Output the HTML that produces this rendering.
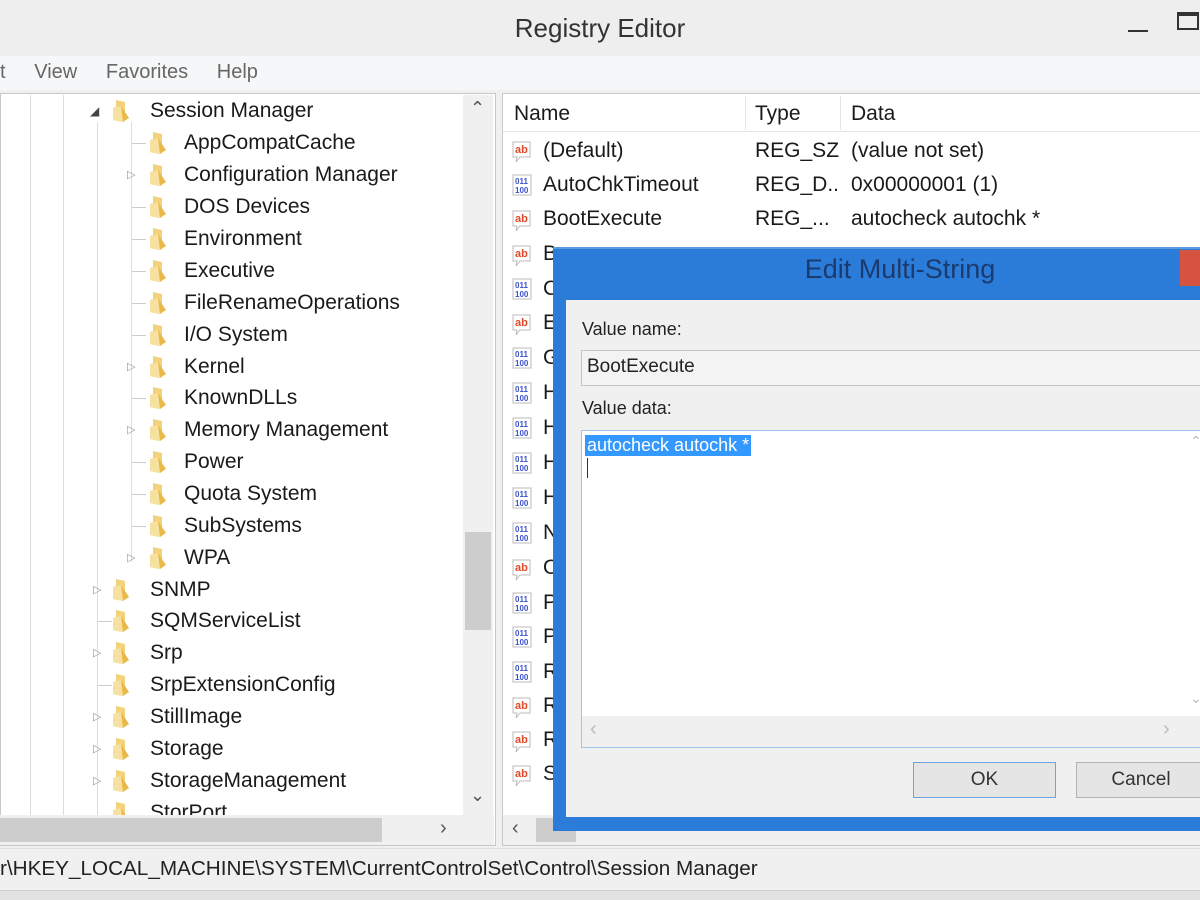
<!DOCTYPE html>
<html><head><meta charset="utf-8"><style>
*{margin:0;padding:0;box-sizing:border-box}
body{width:1200px;height:900px;overflow:hidden;background:#f0f0f0;font-family:"Liberation Sans",sans-serif;position:relative;color:#222}
.a{position:absolute;white-space:nowrap}
.t{font-size:21px;color:#1a1a1a;line-height:24px}
.f{position:absolute;width:20px;height:24px}
.ex{position:absolute;font-size:11px;color:#999}
.ic{position:absolute;width:24px;height:26px}
.h{position:absolute;height:1px;width:14px;background:#ccc}
</style></head><body>
<!-- title bar -->
<div class="a" style="left:0;top:0;width:1200px;height:56px;background:#eeeeee"></div>
<div class="a" style="left:0;top:13px;width:1200px;text-align:center;font-size:26px;color:#333">Registry Editor</div>
<div class="a" style="left:1128px;top:30px;width:20px;height:2px;background:#333"></div>
<div class="a" style="left:1177px;top:12px;width:22px;height:18px;border:2px solid #333;border-top-width:4px"></div>
<!-- menu -->
<div class="a" style="left:0;top:56px;width:1200px;height:34px;background:#f6f7f8"></div>
<div class="a" style="left:0;top:61px;font-size:20px;color:#666;word-spacing:4px">t&nbsp;&nbsp; View&nbsp;&nbsp; Favorites&nbsp;&nbsp; Help</div>
<!-- left pane -->
<div class="a" style="left:0;top:93px;width:496px;height:753px;background:#fff;border:1px solid #c8c8c8"></div>
<div class="a" style="left:30px;top:95px;width:1px;height:720px;background:#ddd"></div>
<div class="a" style="left:63px;top:95px;width:1px;height:720px;background:#ddd"></div>
<div class="a" style="left:97px;top:122px;width:1px;height:693px;background:#ddd"></div>
<div class="a" style="left:131px;top:122px;width:1px;height:440px;background:#ddd"></div>
<!-- vertical scrollbar -->
<div class="a" style="left:463px;top:95px;width:30px;height:720px;background:#f0f0f0"></div>
<div class="a" style="left:465px;top:532px;width:26px;height:98px;background:#cdcdcd"></div>
<div class="a" style="left:470px;top:98px;font-size:18px;color:#555">&#8963;</div>
<div class="a" style="left:470px;top:785px;font-size:18px;color:#555">&#8964;</div>
<!-- horizontal scrollbar -->
<div class="a" style="left:0;top:815px;width:494px;height:30px;background:#f0f0f0"></div>
<div class="a" style="left:0;top:818px;width:382px;height:24px;background:#cdcdcd"></div>
<div class="a" style="left:440px;top:817px;font-size:20px;color:#555">&#8250;</div>

<svg width="0" height="0" style="position:absolute"><defs>
<g id="fd"><path d="M5 2 L14 4 L14 22 L5 20 Z" fill="#f2d27a"/><path d="M2 10 L10 8 L18 20 L12 24 L2 22 Z" fill="#e9b94a"/><path d="M2 10 L10 8 L12 24 L2 22Z" fill="#f6e1a0"/></g>
<g id="ab"><path d="M3 5 H20 V20 H10 L6 25 L7 20 H3 Z" fill="#fff" stroke="#bbb"/><text x="5" y="16" font-size="11" font-weight="bold" fill="#e24a2a" font-family="Liberation Sans">ab</text></g>
<g id="bn"><path d="M3 3 H21 V23 H3 Z" fill="#fff" stroke="#bbb"/><text x="5" y="12" font-size="8" font-weight="bold" fill="#3a52c8" font-family="Liberation Sans">011</text><text x="5" y="21" font-size="8" font-weight="bold" fill="#3a52c8" font-family="Liberation Sans">100</text></g>
</defs></svg>

<!-- tree rows -->
<div class="a" style="left:90px;top:104px;font-size:12px;color:#444">&#9698;</div>
<svg class="f" style="left:111px;top:98px"><use href="#fd"/></svg><div class="a t" style="left:150px;top:99px">Session Manager</div>

<div class="h" style="left:132px;top:143px"></div><svg class="f" style="left:148px;top:130px"><use href="#fd"/></svg><div class="a t" style="left:184px;top:131px">AppCompatCache</div>
<div class="ex" style="left:127px;top:168px">&#9655;</div><svg class="f" style="left:148px;top:162px"><use href="#fd"/></svg><div class="a t" style="left:184px;top:163px">Configuration Manager</div>
<div class="h" style="left:132px;top:207px"></div><svg class="f" style="left:148px;top:194px"><use href="#fd"/></svg><div class="a t" style="left:184px;top:195px">DOS Devices</div>
<div class="h" style="left:132px;top:239px"></div><svg class="f" style="left:148px;top:226px"><use href="#fd"/></svg><div class="a t" style="left:184px;top:227px">Environment</div>
<div class="h" style="left:132px;top:271px"></div><svg class="f" style="left:148px;top:258px"><use href="#fd"/></svg><div class="a t" style="left:184px;top:259px">Executive</div>
<div class="h" style="left:132px;top:303px"></div><svg class="f" style="left:148px;top:290px"><use href="#fd"/></svg><div class="a t" style="left:184px;top:291px">FileRenameOperations</div>
<div class="h" style="left:132px;top:335px"></div><svg class="f" style="left:148px;top:322px"><use href="#fd"/></svg><div class="a t" style="left:184px;top:323px">I/O System</div>
<div class="ex" style="left:127px;top:360px">&#9655;</div><svg class="f" style="left:148px;top:354px"><use href="#fd"/></svg><div class="a t" style="left:184px;top:355px">Kernel</div>
<div class="h" style="left:132px;top:398px"></div><svg class="f" style="left:148px;top:385px"><use href="#fd"/></svg><div class="a t" style="left:184px;top:386px">KnownDLLs</div>
<div class="ex" style="left:127px;top:423px">&#9655;</div><svg class="f" style="left:148px;top:417px"><use href="#fd"/></svg><div class="a t" style="left:184px;top:418px">Memory Management</div>
<div class="h" style="left:132px;top:462px"></div><svg class="f" style="left:148px;top:449px"><use href="#fd"/></svg><div class="a t" style="left:184px;top:450px">Power</div>
<div class="h" style="left:132px;top:494px"></div><svg class="f" style="left:148px;top:481px"><use href="#fd"/></svg><div class="a t" style="left:184px;top:482px">Quota System</div>
<div class="h" style="left:132px;top:526px"></div><svg class="f" style="left:148px;top:513px"><use href="#fd"/></svg><div class="a t" style="left:184px;top:514px">SubSystems</div>
<div class="ex" style="left:127px;top:551px">&#9655;</div><svg class="f" style="left:148px;top:545px"><use href="#fd"/></svg><div class="a t" style="left:184px;top:546px">WPA</div>

<div class="ex" style="left:93px;top:583px">&#9655;</div><svg class="f" style="left:111px;top:577px"><use href="#fd"/></svg><div class="a t" style="left:150px;top:578px">SNMP</div>
<div class="h" style="left:98px;top:621px"></div><svg class="f" style="left:111px;top:608px"><use href="#fd"/></svg><div class="a t" style="left:150px;top:609px">SQMServiceList</div>
<div class="ex" style="left:93px;top:646px">&#9655;</div><svg class="f" style="left:111px;top:640px"><use href="#fd"/></svg><div class="a t" style="left:150px;top:641px">Srp</div>
<div class="h" style="left:98px;top:685px"></div><svg class="f" style="left:111px;top:672px"><use href="#fd"/></svg><div class="a t" style="left:150px;top:673px">SrpExtensionConfig</div>
<div class="ex" style="left:93px;top:710px">&#9655;</div><svg class="f" style="left:111px;top:704px"><use href="#fd"/></svg><div class="a t" style="left:150px;top:705px">StillImage</div>
<div class="ex" style="left:93px;top:742px">&#9655;</div><svg class="f" style="left:111px;top:736px"><use href="#fd"/></svg><div class="a t" style="left:150px;top:737px">Storage</div>
<div class="ex" style="left:93px;top:774px">&#9655;</div><svg class="f" style="left:111px;top:768px"><use href="#fd"/></svg><div class="a t" style="left:150px;top:769px">StorageManagement</div>
<div style="position:absolute;left:100px;top:798px;width:360px;height:17px;overflow:hidden"><svg class="f" style="left:11px;top:2px"><use href="#fd"/></svg><div class="a t" style="left:50px;top:3px">StorPort</div></div>

<!-- right pane -->
<div class="a" style="left:502px;top:93px;width:700px;height:753px;background:#fff;border:1px solid #c8c8c8"></div>
<div class="a" style="left:503px;top:94px;width:697px;height:38px;background:#fff;border-bottom:1px solid #e5e5e5"></div>
<div class="a" style="left:745px;top:96px;width:1px;height:34px;background:#e5e5e5"></div>
<div class="a" style="left:840px;top:96px;width:1px;height:34px;background:#e5e5e5"></div>
<div class="a t" style="left:514px;top:102px">Name</div>
<div class="a t" style="left:755px;top:102px">Type</div>
<div class="a t" style="left:851px;top:102px">Data</div>
<svg class="ic" style="left:510px;top:137px"><use href="#ab"/></svg><div class="a t" style="left:543px;top:139px">(Default)</div><div class="a t" style="left:755px;top:139px">REG_SZ</div><div class="a t" style="left:851px;top:139px">(value not set)</div>
<svg class="ic" style="left:510px;top:172px"><use href="#bn"/></svg><div class="a t" style="left:543px;top:173px">AutoChkTimeout</div><div class="a t" style="left:755px;top:173px;width:82px;overflow:hidden">REG_D...</div><div class="a t" style="left:851px;top:173px">0x00000001 (1)</div>
<svg class="ic" style="left:510px;top:206px"><use href="#ab"/></svg><div class="a t" style="left:543px;top:207px">BootExecute</div><div class="a t" style="left:755px;top:207px">REG_...</div><div class="a t" style="left:851px;top:207px">autocheck autochk *</div>
<svg class="ic" style="left:510px;top:241px"><use href="#ab"/></svg><div class="a t" style="left:543px;top:242px">B</div>
<svg class="ic" style="left:510px;top:276px"><use href="#bn"/></svg><div class="a t" style="left:543px;top:277px">C</div>
<svg class="ic" style="left:510px;top:310px"><use href="#ab"/></svg><div class="a t" style="left:543px;top:311px">E</div>
<svg class="ic" style="left:510px;top:345px"><use href="#bn"/></svg><div class="a t" style="left:543px;top:346px">G</div>
<svg class="ic" style="left:510px;top:380px"><use href="#bn"/></svg><div class="a t" style="left:543px;top:381px">H</div>
<svg class="ic" style="left:510px;top:415px"><use href="#bn"/></svg><div class="a t" style="left:543px;top:416px">H</div>
<svg class="ic" style="left:510px;top:450px"><use href="#bn"/></svg><div class="a t" style="left:543px;top:451px">H</div>
<svg class="ic" style="left:510px;top:485px"><use href="#bn"/></svg><div class="a t" style="left:543px;top:486px">H</div>
<svg class="ic" style="left:510px;top:520px"><use href="#bn"/></svg><div class="a t" style="left:543px;top:521px">N</div>
<svg class="ic" style="left:510px;top:555px"><use href="#ab"/></svg><div class="a t" style="left:543px;top:556px">O</div>
<svg class="ic" style="left:510px;top:590px"><use href="#bn"/></svg><div class="a t" style="left:543px;top:591px">P</div>
<svg class="ic" style="left:510px;top:624px"><use href="#bn"/></svg><div class="a t" style="left:543px;top:625px">P</div>
<svg class="ic" style="left:510px;top:659px"><use href="#bn"/></svg><div class="a t" style="left:543px;top:660px">R</div>
<svg class="ic" style="left:510px;top:693px"><use href="#ab"/></svg><div class="a t" style="left:543px;top:694px">R</div>
<svg class="ic" style="left:510px;top:727px"><use href="#ab"/></svg><div class="a t" style="left:543px;top:728px">R</div>
<svg class="ic" style="left:510px;top:761px"><use href="#ab"/></svg><div class="a t" style="left:543px;top:762px">S</div>
<div class="a" style="left:503px;top:815px;width:697px;height:30px;background:#f0f0f0"></div>
<div class="a" style="left:536px;top:818px;width:40px;height:24px;background:#cdcdcd"></div>
<div class="a" style="left:512px;top:817px;font-size:20px;color:#555">&#8249;</div>

<!-- dialog -->
<div class="a" style="left:553px;top:247px;width:660px;height:584px;background:#2b7bd8"></div>
<div class="a" style="left:553px;top:247px;width:660px;height:2px;background:#5a9be0"></div>
<div class="a" style="left:1180px;top:250px;width:30px;height:36px;background:#d65241"></div>
<div class="a" style="left:553px;top:254px;width:694px;text-align:center;font-size:27px;color:#1b3b6f">Edit Multi-String</div>
<div class="a" style="left:566px;top:300px;width:640px;height:517px;background:#f0f0f0"></div>
<div class="a" style="left:582px;top:319px;font-size:18px;color:#222">Value name:</div>
<div class="a" style="left:581px;top:350px;width:630px;height:36px;background:#f3f3f3;border:1px solid #c5c5c5"></div>
<div class="a" style="left:587px;top:356px;font-size:19px;color:#222">BootExecute</div>
<div class="a" style="left:582px;top:398px;font-size:18px;color:#222">Value data:</div>
<div class="a" style="left:581px;top:430px;width:630px;height:318px;background:#fff;border:1px solid #9fc3ea"></div>
<div class="a" style="left:582px;top:716px;width:620px;height:31px;background:#f0f0f0"></div>
<div class="a" style="left:590px;top:718px;font-size:20px;color:#bbb">&#8249;</div>
<div class="a" style="left:1163px;top:718px;font-size:20px;color:#bbb">&#8250;</div>
<div class="a" style="left:1190px;top:433px;font-size:14px;color:#bbb">&#8963;</div>
<div class="a" style="left:1190px;top:690px;font-size:14px;color:#bbb">&#8964;</div>
<div class="a" style="left:585px;top:435px;height:21px;padding:0 2px;background:#3399ff;color:#fff;font-size:18px;line-height:21px">autocheck autochk *</div>
<div class="a" style="left:587px;top:458px;width:1px;height:20px;background:#333"></div>
<div class="a" style="left:913px;top:762px;width:143px;height:36px;background:#e5e5e5;border:1px solid #6ba5e0;text-align:center;line-height:34px;font-size:19px;color:#333">OK</div>
<div class="a" style="left:1076px;top:762px;width:140px;height:36px;background:#e5e5e5;border:1px solid #b5b5b5;text-align:center;line-height:34px;font-size:19px;color:#333;padding-right:10px">Cancel</div>

<!-- status bar -->
<div class="a" style="left:0;top:848px;width:1200px;height:42px;background:#f0f0f0;border-top:1px solid #ddd"></div>
<div class="a" style="left:0;top:857px;font-size:20.7px;color:#222">r\HKEY_LOCAL_MACHINE\SYSTEM\CurrentControlSet\Control\Session Manager</div>
<div class="a" style="left:0;top:890px;width:1200px;height:10px;background:#e2e2e2;border-top:1px solid #d0d0d0"></div>
</body></html>
